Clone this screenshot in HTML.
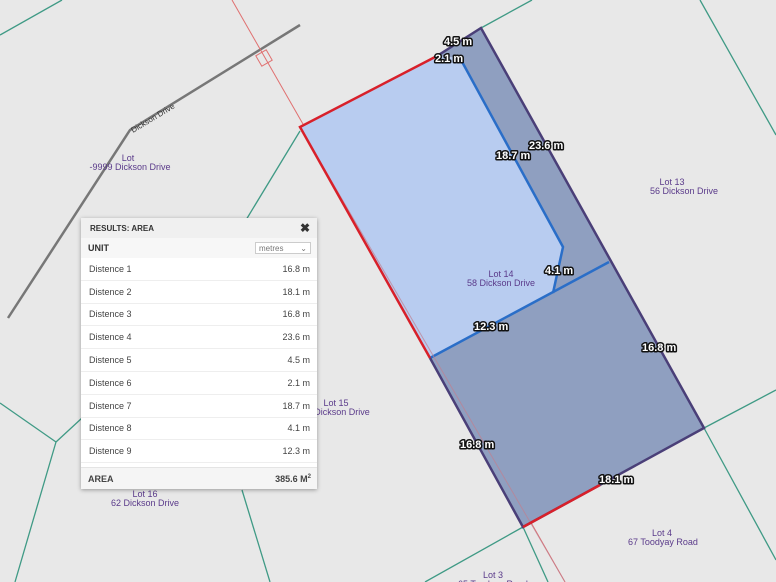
<!DOCTYPE html>
<html><head><meta charset="utf-8"><style>
body{margin:0;width:776px;height:582px;overflow:hidden;background:#e8e8e8;font-family:"Liberation Sans",sans-serif;position:relative}
svg{position:absolute;left:0;top:0}
.lbl{font:bold 11px "Liberation Sans",sans-serif;fill:#fff;stroke:#111;stroke-width:3px;paint-order:stroke;stroke-linejoin:round}
.lot{font:9px "Liberation Sans",sans-serif;fill:#5a3a8a;text-anchor:middle}
#p{position:absolute;left:81px;top:218px;width:236px;height:271px;background:#fff;box-shadow:0 1px 4px rgba(0,0,0,.35);font-size:9px;color:#444}
.hd{height:20px;background:#f0f0f0;display:flex;align-items:center;justify-content:space-between;padding:0 7px 0 9px;font-size:8px;font-weight:bold;color:#333}
.un{height:20px;display:flex;align-items:center;justify-content:space-between;padding:0 6px 0 7px;font-weight:bold;font-size:9px;color:#333;background:#f7f7f7}
.sel{width:56px;height:12px;border:1px solid #ccc;background:#fff;font-weight:normal;font-size:8px;color:#777;display:flex;justify-content:space-between;align-items:center;padding:0 3px;box-sizing:border-box}
.r{height:22.8px;display:flex;align-items:center;justify-content:space-between;padding:0 7px 0 8px;border-bottom:1px solid #eee;box-sizing:border-box}
.ar{position:absolute;left:0;right:0;bottom:0;height:21px;background:#f5f5f5;display:flex;align-items:center;justify-content:space-between;padding:0 6px 0 7px;font-weight:bold;color:#444;border-top:1px solid #e4e4e4}
</style></head><body>
<svg width="776" height="582">
<g stroke="#3f9a85" stroke-width="1.3" fill="none">
<line x1="0" y1="35" x2="62" y2="0"/><line x1="300" y1="131" x2="246" y2="220"/>
<line x1="481" y1="28" x2="532" y2="0"/><line x1="700" y1="0" x2="776" y2="135"/>
<line x1="704" y1="428" x2="776" y2="390"/><line x1="704" y1="428" x2="776" y2="560"/>
<line x1="523" y1="527" x2="425" y2="582"/><line x1="523" y1="527" x2="548" y2="582"/>
<line x1="0" y1="403" x2="56" y2="442"/><line x1="56" y1="442" x2="82" y2="418"/><line x1="56" y1="442" x2="15" y2="582"/>
<line x1="242" y1="490" x2="270" y2="582"/>
</g>
<polyline points="300,25 130,130 8,318" stroke="#777" stroke-width="2.5" fill="none"/>
<text transform="translate(133,133) rotate(-31)" font-size="8" fill="#333">Dickson Drive</text>
<line x1="232" y1="0" x2="565" y2="582" stroke="#e07070" stroke-width="1"/>
<rect x="258" y="52" width="12" height="12" transform="rotate(-30 264 58)" fill="none" stroke="#e07070"/>
<polygon points="481,28 704,428 523,527 430,358 553,293 563,247 460,58 437,56" fill="#8f9fc0"/>
<polygon points="300,127 437,56 460,58 563,247 553,293 430,358" fill="#b8ccf0"/>
<polyline points="460,58 563,247 553,293" stroke="#2a6ec8" stroke-width="2.5" fill="none"/>
<line x1="430" y1="358" x2="609" y2="262" stroke="#2a6ec8" stroke-width="2.5"/>
<line x1="300" y1="127" x2="565" y2="582" stroke="#c08090" stroke-width="1" opacity=".7"/>
<polyline points="437,56 481,28 704,428 523,527 430,358" stroke="#4a3f78" stroke-width="2.5" fill="none"/>
<polyline points="430,358 300,127 437,56" stroke="#d8202a" stroke-width="2.5" fill="none"/>
<line x1="523" y1="527" x2="600" y2="485" stroke="#d8202a" stroke-width="2.5"/>
<text class="lbl" x="444" y="45">4.5 m</text><text class="lbl" x="435" y="62">2.1 m</text>
<text class="lbl" x="529" y="149">23.6 m</text><text class="lbl" x="496" y="159">18.7 m</text>
<text class="lbl" x="545" y="274">4.1 m</text><text class="lbl" x="474" y="330">12.3 m</text>
<text class="lbl" x="642" y="351">16.8 m</text><text class="lbl" x="460" y="448">16.8 m</text>
<text class="lbl" x="599" y="483">18.1 m</text>
<text class="lot" x="128" y="161">Lot</text><text class="lot" x="130" y="170">-9999 Dickson Drive</text>
<text class="lot" x="672" y="185">Lot 13</text><text class="lot" x="684" y="194">56 Dickson Drive</text>
<text class="lot" x="501" y="277">Lot 14</text><text class="lot" x="501" y="286">58 Dickson Drive</text>
<text class="lot" x="336" y="406">Lot 15</text><text class="lot" x="342" y="415">Dickson Drive</text>
<text class="lot" x="145" y="497">Lot 16</text><text class="lot" x="145" y="506">62 Dickson Drive</text>
<text class="lot" x="662" y="536">Lot 4</text><text class="lot" x="663" y="545">67 Toodyay Road</text>
<text class="lot" x="493" y="578">Lot 3</text><text class="lot" x="493" y="587">65 Toodyay Road</text>
</svg>
<div id="p">
<div class="hd"><span>RESULTS: AREA</span><span style="font-size:12px">✖</span></div>
<div class="un"><span>UNIT</span><span class="sel"><span>metres</span><span>⌄</span></span></div>
<div class="r"><span>Distence 1</span><span>16.8 m</span></div>
<div class="r"><span>Distence 2</span><span>18.1 m</span></div>
<div class="r"><span>Distence 3</span><span>16.8 m</span></div>
<div class="r"><span>Distence 4</span><span>23.6 m</span></div>
<div class="r"><span>Distence 5</span><span>4.5 m</span></div>
<div class="r"><span>Distence 6</span><span>2.1 m</span></div>
<div class="r"><span>Distence 7</span><span>18.7 m</span></div>
<div class="r"><span>Distence 8</span><span>4.1 m</span></div>
<div class="r"><span>Distence 9</span><span>12.3 m</span></div>
<div class="ar"><span>AREA</span><span>385.6 M<sup style="font-size:6px">2</sup></span></div>
</div>
</body></html>
